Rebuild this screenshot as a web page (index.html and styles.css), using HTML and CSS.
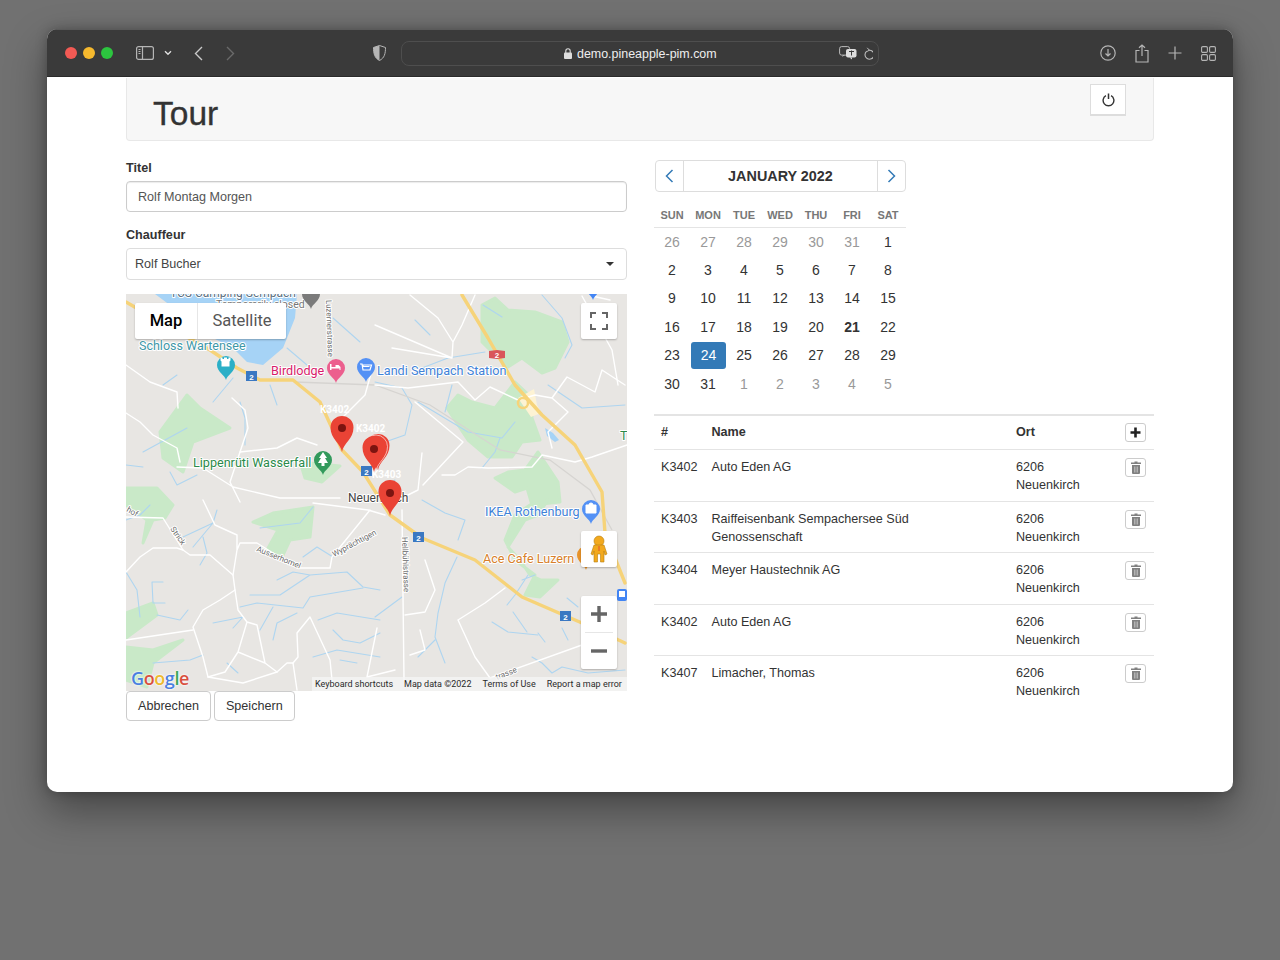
FILE: index.html
```html
<!DOCTYPE html>
<html lang="de">
<head>
<meta charset="utf-8">
<title>Tour</title>
<link rel="stylesheet" href="styles.css">
</head>
<body>
<div class="window">
  <header class="toolbar">
    <div class="lights"><span class="dot red"></span><span class="dot yellow"></span><span class="dot green"></span></div>
    <svg class="ti sidebar" width="18" height="14" viewBox="0 0 18 14"><rect x=".6" y=".6" width="16.8" height="12.8" rx="2" fill="none" stroke="#b5b5b5" stroke-width="1.2"/><path d="M6.5 1v12" stroke="#b5b5b5" stroke-width="1.2"/><path d="M2.5 3.5h2M2.5 5.5h2M2.5 7.5h2" stroke="#b5b5b5"/></svg>
    <svg class="ti chevdown" width="8" height="6" viewBox="0 0 8 6"><path d="M1 1.2l3 3 3-3" fill="none" stroke="#ddd" stroke-width="1.4"/></svg>
    <svg class="ti back" width="9" height="15" viewBox="0 0 9 15"><path d="M8 1L1.5 7.5 8 14" fill="none" stroke="#c9c9c9" stroke-width="1.4"/></svg>
    <svg class="ti forward" width="9" height="15" viewBox="0 0 9 15"><path d="M1 1l6.500 6.500L1 14" fill="none" stroke="#6a6a6a" stroke-width="1.4"/></svg>
    <svg class="ti shield" width="13" height="16" viewBox="0 0 13 16"><path d="M6.500.5L12.500 2.500c0 6-1 10.500-6 13-5-2.500-6-7-6-13z" fill="#3a3a3a" stroke="#b5b5b5"/><path d="M6.500.5L.5 2.500c0 6 1 10.500 6 13z" fill="#b5b5b5"/></svg>
    <div class="address">
      <svg class="lock" width="8" height="11" viewBox="0 0 8 11"><rect y="4.500" width="8" height="6.500" rx="1" fill="#ddd"/><path d="M1.800 5V3a2.200 2.200 0 014.400 0v2" fill="none" stroke="#ddd" stroke-width="1.100"/></svg>
      <span class="url">demo.pineapple-pim.com</span>
      <svg class="translate" width="18" height="14" viewBox="0 0 18 14"><rect x=".6" y=".6" width="10" height="8.500" rx="2" fill="none" stroke="#bbb"/><path d="M3 11l1-2h2z" fill="#bbb"/><rect x="7" y="3" width="10.500" height="8.500" rx="2" fill="#ddd"/><path d="M13 11.500v2l-2.500-2z" fill="#ddd"/><path d="M10 5.500h5M12.500 4.500v5" stroke="#3a3a3a"/></svg>
      <svg class="reload" width="11" height="13" viewBox="0 0 11 13"><path d="M6.800 2.700A4.500 4.500 0 115 3.500" fill="none" stroke="#bbb" stroke-width="1.100" transform="translate(-.2 .6)"/><path d="M5.200 .8l2.200 2.400-2.600 1.400" fill="none" stroke="#bbb"/></svg>
    </div>
    <div class="tools">
      <svg width="16" height="16" viewBox="0 0 16 16"><circle cx="8" cy="8" r="7.200" fill="none" stroke="#b5b5b5" stroke-width="1.200"/><path d="M8 4v7M5.500 8.500L8 11l2.500-2.500" fill="none" stroke="#b5b5b5" stroke-width="1.200"/></svg>
      <svg width="14" height="19" viewBox="0 0 14 19"><path d="M4.500 6.500H1v11.500h12V6.500H9.500" fill="none" stroke="#b5b5b5" stroke-width="1.200"/><path d="M7 12V1M4 3.800L7 1l3 2.800" fill="none" stroke="#b5b5b5" stroke-width="1.200"/></svg>
      <svg width="14" height="14" viewBox="0 0 14 14"><path d="M7 .5v13M.5 7h13" stroke="#b5b5b5" stroke-width="1.200"/></svg>
      <svg width="15" height="15" viewBox="0 0 15 15"><g fill="none" stroke="#b5b5b5" stroke-width="1.100"><rect x=".6" y=".6" width="5.800" height="5.800" rx="1.200"/><rect x="8.600" y=".6" width="5.800" height="5.800" rx="1.200"/><rect x=".6" y="8.600" width="5.800" height="5.800" rx="1.200"/><rect x="8.600" y="8.600" width="5.800" height="5.800" rx="1.200"/></g></svg>
    </div>
  </header>

  <main class="page">
    <div class="container">
      <div class="page-header">
        <h1>Tour</h1>
        <button class="power" type="button" aria-label="Abmelden">
          <svg width="13" height="14" viewBox="0 0 12 13"><path d="M3.600 2.500a5 5 0 104.800 0" fill="none" stroke="#333" stroke-width="1.300"/><path d="M6 .5v5" stroke="#333" stroke-width="1.400"/></svg>
        </button>
      </div>

      <div class="columns">
        <section class="left">
          <label class="lbl">Titel</label>
          <div class="input">Rolf Montag Morgen</div>
          <label class="lbl second">Chauffeur</label>
          <div class="select"><span>Rolf Bucher</span><i class="caret"></i></div>

          <div class="map">
            <svg class="mapsvg" width="501" height="397" viewBox="126 294 501 397">
              <defs>
                <path id="drop" d="M0 0C-1-5-9-8-9-15a9 9 0 1 1 18 0C9-8 1-5 0 0Z"/>
                <path id="pin" d="M0 0C-1.500-9-11.500-13-11.500-24.500a11.500 11.500 0 1 1 23 0C11.500-13 1.500-9 0 0Z"/>
              </defs>
              <rect x="126" y="294" width="501" height="397" fill="#e8e6e3"/>
              <g class="soft">
              <g class="parks">
                <path d="M482 305L495 298 508 310 535 312 562 322 568 342 555 368 542 373 522 358 508 367 488 348 482 342Z"/>
                <path d="M447 408L458 395 472 402 495 408 515 382 532 398 532 418 540 440 522 442 512 457 488 457 468 440 458 425Z"/>
                <path d="M538 452L558 482 560 502 532 505 527 488 515 492 495 478 508 472 525 470Z"/>
                <path d="M548 500L538 515 525 520 508 547 520 560 530 575 541 580 558 580 540 597 525 595 535 575 515 560 505 540 515 515 530 505Z"/>
                <path d="M160 432L187 395 200 408 230 428 193 442 183 472 163 458Z"/>
                <path d="M126 488L157 488 173 505 165 518 153 520 143 543 147 520 126 505Z"/>
                <path d="M253 522L273 513 313 507 310 537 290 540 283 555 267 550 278 530Z"/>
                <path d="M126 613L153 603 157 615 126 638Z"/>
                <path d="M126 647L153 650 183 640 153 663 147 687 126 680Z"/>
                <path d="M300 462L340 466 322 482 305 478Z"/>
              </g>
              <path d="M155 294H297L295 318 283 348 263 365 247 362 233 348 213 338 190 320Z" fill="#a6d3f6"/>
              <path d="M545 428l8 5 6 7-4 2-8-6z" fill="#a6d3f6"/>
              <path d="M518 398l16-9 3 16 4 8-10 4z" fill="#fdf3d4"/>
              <g class="streams">
                <path d="M287 348L307 365M333 318L360 342M163 385L177 375M270 385L277 405M213 402L233 378M187 428L143 452M126 465L143 467"/>
                <path d="M240 402L245 418 245 445M170 472L177 485 197 475"/>
                <path d="M422 368L448 358 485 352M375 382L402 388 412 405 405 435 385 442M452 385L445 412M418 402L468 432 502 438 515 422M500 438L495 452 482 468"/>
                <path d="M483 305L502 317M542 295L562 318 572 345 565 358M548 385L582 408 625 405"/>
                <path d="M217 510L213 523 183 537M203 537L207 553 200 565M213 523L193 547M260 528L300 523 313 507M303 557L317 547 333 557"/>
                <path d="M277 580L293 572 310 575 347 572 363 587 380 590M250 595L280 595 310 575M240 607L257 603 303 608 310 597 363 588"/>
                <path d="M213 623L243 617 233 628M273 640L277 623 297 613M260 630L273 607M318 620L337 613 380 620M333 630L343 640 360 643 380 633M313 657L337 650 380 657M340 660L357 663"/>
                <path d="M126 572L137 590 140 617M152 582H163M152 582L153 603H165M157 615L180 620 188 610M153 663L190 660 203 655M227 663L238 673"/>
                <path d="M422 500L445 513 465 520 458 540M457 557L445 583 438 613 435 637 445 663M418 657L435 640M375 617L402 597M492 622L508 632 538 635M513 612L527 632"/>
                <path d="M562 628L568 640M538 633L545 642M507 605L515 595 528 575M522 580L535 575M567 598L578 607M552 673L562 667 588 673 625 670M532 657L542 663 552 673"/>
                <path d="M375 495L395 480M415 320L430 335M126 520L140 515 150 505"/>
              </g>
              <path class="rail" d="M295 382L375 385 430 405 500 450 550 460 590 490 612 530"/>
              <g class="roads">
                <path d="M126 365L150 382 177 392 178 408M126 413L140 422 153 435 177 448 180 462M240 452L277 448 297 438 317 445M240 452L230 482 240 502M177 467L203 468 233 487 280 498 340 498"/>
                <path d="M232 398L245 410 248 428 240 452"/>
                <path d="M410 295L438 318 453 342 452 358 375 325M392 348L452 358M453 342L462 325 475 295M458 382L475 400 490 387 518 400M458 382L408 388 375 385"/>
                <path d="M518 400L535 395 552 398 567 377 595 392 602 370 625 385M552 398L568 412 548 432 552 448M627 445L592 457 575 462 542 455 532 467 488 468 468 467 455 475 442 475"/>
                <path d="M415 402L463 442 423 485M422 453L418 490 408 495M582 296L612 350 618 385M592 296L610 300"/>
                <path d="M402 510L404 680M405 615L425 612 435 590 425 560M458 620L485 603 505 588M458 620L475 657 490 678M490 678L582 645"/>
                <path d="M126 517L163 518 183 550 190 555 210 555 233 575 235 590 220 600 203 610 193 627 203 657 208 677 243 683 277 672 287 663 293 663 297 690"/>
                <path d="M126 640L193 630M126 572L140 557 153 548 177 548 183 550M203 500L215 525 237 535 237 550 233 575M237 550L240 543 257 543 297 568 330 568 332 557 370 510M313 503L368 510 385 515"/>
                <path d="M235 590L238 610 247 622 257 625 265 663 277 672M247 622L238 652 265 663M238 652L225 672 208 677M297 633L310 617 330 660 333 690M297 633L298 657 293 663M377 628L367 677M367 677L395 670M420 630L425 650 410 655"/>
                <path d="M340 420L365 395 372 370"/>
              </g>
              <g class="highway">
                <path d="M126 302L145 313 210 350 237 368 260 380 293 380 320 402 342 450 363 472 390 515 422 538 475 560 522 597 582 623 625 643"/>
                <path d="M462 295L488 338 515 385 542 415 575 445 602 492 605 533 625 583"/>
              </g>
              <circle cx="523" cy="403" r="5" fill="none" stroke="#f6d379" stroke-width="2.500"/>
              </g>
              <g class="roadname">
                <text transform="translate(326 300) rotate(88)">Luzernerstrasse</text>
                <text transform="translate(170 529) rotate(55)">Strick</text>
                <text transform="translate(256 551) rotate(22)">Ausserhomel</text>
                <text transform="translate(334 557) rotate(-28)">Wyprächtigen</text>
                <text transform="translate(402 537) rotate(88)">Hellbühlstrasse</text>
                <text transform="translate(126 511) rotate(30)">hof</text>
                <text transform="translate(497 680) rotate(-22)">trasse</text>
              </g>
              <text class="poi gray" x="170" y="297">TCS Camping Sempach</text>
              <text class="closed" x="216" y="308">Temporarily closed</text>
              <use href="#drop" x="311" y="309" fill="#7b7b7b"/>
              <use href="#drop" x="593" y="300" fill="#4285f4"/>
              <use href="#drop" x="226" y="380" fill="#2bafc7"/>
              <use href="#drop" x="336" y="383" fill="#ec5f8e"/>
              <use href="#drop" x="366" y="382" fill="#5491f5"/>
              <use href="#drop" x="323" y="475" fill="#329a5c"/>
              <use href="#drop" x="591" y="524" fill="#5491f5"/>
              <use href="#drop" x="586" y="570" fill="#e8932a"/>
              <g fill="#fff">
                <path d="M221 361v-3h2v1.500h1.500V358h3v1.500H229V358h2v3l-1 1v5h-8v-5z" transform="translate(-.500 -.500)"/>
                <path d="M330 370v-6h1.500v3h4v-2h3l2 2v3h-1v-1.500h-8V370z"/>
                <path d="M360 364h2l1 6h7l1.500-5H363v1.500h6.500" fill="none" stroke="#fff" stroke-width="1.200"/>
                <path d="M323 452l4 6h-2l3 5h-3.500v3h-3v-3H318l3-5h-2z"/>
                <path d="M586 505h10v8h-10zM589 505a2 2 0 014 0" stroke="#fff"/>
              </g>
              <g class="shield-blue">
                <rect x="246" y="371" width="11" height="10"/><text x="251.500" y="379.500">2</text>
                <rect x="361" y="466" width="11" height="10"/><text x="366.500" y="474.500">2</text>
                <rect x="413" y="532" width="11" height="10"/><text x="418.500" y="540.500">2</text>
                <rect x="560" y="611" width="11" height="10"/><text x="565.500" y="619.500">2</text>
              </g>
              <g class="shield-red">
                <path d="M489 351l8-1 8 1v7l-8 1-8-1z"/><text x="497" y="358">2</text>
              </g>
              <rect x="617" y="589" width="10" height="12" rx="2" fill="#4285f4"/>
              <rect x="619" y="591" width="6" height="6" fill="#fff"/>
              <text class="poi teal" x="139" y="350">Schloss Wartensee</text>
              <text class="poi pink" x="271" y="375">Birdlodge</text>
              <text class="poi blue" x="377" y="374.500">Landi Sempach Station</text>
              <text class="poi greenl" x="193" y="467">Lippenrüti Wasserfall</text>
              <text class="poi dark" x="348" y="502">Neuenkirch</text>
              <text class="poi blue" x="485" y="516">IKEA Rothenburg</text>
              <text class="poi orange" x="483" y="562.500">Ace Cafe Luzern</text>
              <text class="poi greenl" x="620" y="440">T</text>
              <g class="mlabel">
                <text x="320" y="413">K3402</text>
                <text x="356" y="432">K3402</text>
                <text x="372" y="478">K3403</text>
              </g>
              <use href="#pin" x="378" y="470" fill="#ea4335"/>
              <use href="#pin" x="376" y="471" fill="#ea4335" stroke="#fff" stroke-width=".6"/>
              <use href="#pin" x="342" y="452" fill="#ea4335"/>
              <use href="#pin" x="374" y="472" fill="#ea4335"/>
              <use href="#pin" x="390" y="516" fill="#ea4335"/>
              <circle cx="342" cy="428" r="4" fill="#7c1410"/>
              <circle cx="374" cy="449" r="4" fill="#7c1410"/>
              <circle cx="390" cy="493" r="4" fill="#7c1410"/>
            </svg>

            <div class="mapctl maptype"><span class="mt on">Map</span><span class="mt">Satellite</span></div>
            <div class="mapctl fullscreen">
              <svg width="18" height="18" viewBox="0 0 18 18"><path d="M1 6V1h5M12 1h5v5M17 12v5h-5M6 17H1v-5" fill="none" stroke="#666" stroke-width="2"/></svg>
            </div>
            <div class="mapctl pegman">
              <svg width="18" height="28" viewBox="0 0 18 28"><circle cx="9" cy="6" r="5" fill="#f2a91e" stroke="#b77f10" stroke-width=".6"/><path d="M4 10h10l3 9-2 1-1-4v11h-3.500v-8h-3v8H4V16l-1 4-2-1z" fill="#f2a91e" stroke="#b77f10" stroke-width=".6"/><path d="M9 11v5" stroke="#e0532f"/></svg>
            </div>
            <div class="mapctl zoomctl">
              <svg width="18" height="18" viewBox="0 0 18 18"><path d="M9 1v16M1 9h16" stroke="#666" stroke-width="3.400"/></svg>
              <i class="zsep"></i>
              <svg width="18" height="18" viewBox="0 0 18 18"><path d="M1 9h16" stroke="#666" stroke-width="3.400"/></svg>
            </div>
            <div class="glogo"><b class="g1">G</b><b class="g2">o</b><b class="g3">o</b><b class="g1">g</b><b class="g4">l</b><b class="g2">e</b></div>
            <div class="attr">
              <span class="a1">Keyboard shortcuts</span><span class="a2">Map data ©2022</span><span class="a3">Terms of Use</span><span class="a4">Report a map error</span>
            </div>
          </div>

          <div class="buttons">
            <button class="btn" type="button">Abbrechen</button>
            <button class="btn" type="button">Speichern</button>
          </div>
        </section>

        <section class="right">
          <div class="cal-nav">
            <span class="navbtn"><svg width="9" height="14" viewBox="0 0 9 14"><path d="M7.500 1L1.500 7l6 6" fill="none" stroke="#337ab7" stroke-width="1.500"/></svg></span>
            <strong class="cal-title">JANUARY 2022</strong>
            <span class="navbtn"><svg width="9" height="14" viewBox="0 0 9 14"><path d="M1.500 1l6 6-6 6" fill="none" stroke="#337ab7" stroke-width="1.500"/></svg></span>
          </div>
          <div class="cal-grid">
            <span class="dow">SUN</span><span class="dow">MON</span><span class="dow">TUE</span><span class="dow">WED</span><span class="dow">THU</span><span class="dow">FRI</span><span class="dow">SAT</span>
            <span class="d m">26</span><span class="d m">27</span><span class="d m">28</span><span class="d m">29</span><span class="d m">30</span><span class="d m">31</span><span class="d">1</span>
            <span class="d">2</span><span class="d">3</span><span class="d">4</span><span class="d">5</span><span class="d">6</span><span class="d">7</span><span class="d">8</span>
            <span class="d">9</span><span class="d">10</span><span class="d">11</span><span class="d">12</span><span class="d">13</span><span class="d">14</span><span class="d">15</span>
            <span class="d">16</span><span class="d">17</span><span class="d">18</span><span class="d">19</span><span class="d">20</span><span class="d today">21</span><span class="d">22</span>
            <span class="d">23</span><span class="d sel">24</span><span class="d">25</span><span class="d">26</span><span class="d">27</span><span class="d">28</span><span class="d">29</span>
            <span class="d">30</span><span class="d">31</span><span class="d m">1</span><span class="d m">2</span><span class="d m">3</span><span class="d m">4</span><span class="d m">5</span>
          </div>

          <div class="tbl">
            <div class="tr head">
              <span class="c1">#</span><span class="c2">Name</span><span class="c3">Ort</span>
              <span class="c4"><button class="mini" type="button" aria-label="Hinzufügen"><svg width="11" height="11" viewBox="0 0 11 11"><path d="M5.500 .5v10M.5 5.500h10" stroke="#222" stroke-width="2.600"/></svg></button></span>
            </div>
            <div class="tr">
              <span class="c1">K3402</span><span class="c2">Auto Eden AG</span><span class="c3">6206<br>Neuenkirch</span>
              <span class="c4"><button class="mini" type="button" aria-label="Löschen"><svg class="trash" width="10" height="13" viewBox="0 0 10 13"><path d="M3.500 1.500V.5h3v1H10v1.500H0V1.500zM1 4h8v8a1 1 0 01-1 1H2a1 1 0 01-1-1z" fill="#808080"/><path d="M3.500 5.500v6M5 5.500v6M6.500 5.500v6" stroke="#fff" stroke-width=".4"/></svg></button></span>
            </div>
            <div class="tr">
              <span class="c1">K3403</span><span class="c2">Raiffeisenbank Sempachersee Süd<br>Genossenschaft</span><span class="c3">6206<br>Neuenkirch</span>
              <span class="c4"><button class="mini" type="button" aria-label="Löschen"><svg class="trash" width="10" height="13" viewBox="0 0 10 13"><path d="M3.500 1.500V.5h3v1H10v1.500H0V1.500zM1 4h8v8a1 1 0 01-1 1H2a1 1 0 01-1-1z" fill="#808080"/><path d="M3.500 5.500v6M5 5.500v6M6.500 5.500v6" stroke="#fff" stroke-width=".4"/></svg></button></span>
            </div>
            <div class="tr">
              <span class="c1">K3404</span><span class="c2">Meyer Haustechnik AG</span><span class="c3">6206<br>Neuenkirch</span>
              <span class="c4"><button class="mini" type="button" aria-label="Löschen"><svg class="trash" width="10" height="13" viewBox="0 0 10 13"><path d="M3.500 1.500V.5h3v1H10v1.500H0V1.500zM1 4h8v8a1 1 0 01-1 1H2a1 1 0 01-1-1z" fill="#808080"/><path d="M3.500 5.500v6M5 5.500v6M6.500 5.500v6" stroke="#fff" stroke-width=".4"/></svg></button></span>
            </div>
            <div class="tr">
              <span class="c1">K3402</span><span class="c2">Auto Eden AG</span><span class="c3">6206<br>Neuenkirch</span>
              <span class="c4"><button class="mini" type="button" aria-label="Löschen"><svg class="trash" width="10" height="13" viewBox="0 0 10 13"><path d="M3.500 1.500V.5h3v1H10v1.500H0V1.500zM1 4h8v8a1 1 0 01-1 1H2a1 1 0 01-1-1z" fill="#808080"/><path d="M3.500 5.500v6M5 5.500v6M6.500 5.500v6" stroke="#fff" stroke-width=".4"/></svg></button></span>
            </div>
            <div class="tr">
              <span class="c1">K3407</span><span class="c2">Limacher, Thomas</span><span class="c3">6206<br>Neuenkirch</span>
              <span class="c4"><button class="mini" type="button" aria-label="Löschen"><svg class="trash" width="10" height="13" viewBox="0 0 10 13"><path d="M3.500 1.500V.5h3v1H10v1.500H0V1.500zM1 4h8v8a1 1 0 01-1 1H2a1 1 0 01-1-1z" fill="#808080"/><path d="M3.500 5.500v6M5 5.500v6M6.500 5.500v6" stroke="#fff" stroke-width=".4"/></svg></button></span>
            </div>
          </div>
        </section>
      </div>
    </div>
  </main>
</div>
</body>
</html>
```
FILE: styles.css
```css
* { box-sizing: border-box; }
html, body { margin: 0; height: 100%; }
body {
  width: 1280px;
  height: 960px;
  overflow: hidden;
  padding: 29px 47px 0;
  background: #717171;
  font-family: "Liberation Sans", Arial, sans-serif;
  font-size: 12.6px;
  line-height: 18px;
  color: #333;
}
.window {
  width: 1186px;
  height: 763px;
  background: #fff;
  border-radius: 10px;
  overflow: hidden;
  box-shadow: 0 18px 40px rgba(0, 0, 0, .38), 0 0 12px rgba(0, 0, 0, .25);
}
.toolbar {
  height: 48px;
  background: #3a3a3a;
  border-top: 1px solid #5a5a5a;
  border-bottom: 1px solid #2a2a2a;
  display: flex;
  align-items: center;
  padding-left: 18px;
}
.lights { display: flex; gap: 6px; }
.dot { width: 12px; height: 12px; border-radius: 50%; }
.red { background: #f25a54; }
.yellow { background: #f6b92e; }
.green { background: #2cc53f; }
.ti { flex: none; }
.sidebar { margin-left: 23px; }
.chevdown { margin-left: 10px; }
.back { margin-left: 22px; }
.forward { margin-left: 23px; }
.shield { margin-left: 138px; }
.address {
  margin-left: 15px;
  width: 478px;
  height: 25px;
  padding-right: 5px;
  border: 1px solid #4e4e4e;
  border-radius: 8px;
  display: flex;
  align-items: center;
  color: #eee;
  font-size: 12.45px;
}
.lock { margin-left: 162px; flex: none; }
.url { margin: 2px 0 0 5px; white-space: nowrap; }
.translate { margin-left: auto; flex: none; }
.reload { margin-left: 5px; flex: none; }
.tools { margin-left: 221px; display: flex; align-items: center; gap: 19px; }
.tools svg { flex: none; }

.page { height: 714px; }
.container { width: 1028px; margin-left: 79px; }
.page-header {
  height: 63px;
  margin-top: 1px;
  padding: 6px 27px 0;
  background: #f7f7f7;
  border: 1px solid #e8e8e8;
  border-top: 0;
  border-radius: 0 0 4px 4px;
  display: flex;
  justify-content: space-between;
  align-items: flex-start;
}
.page-header h1 {
  margin: 10px 0 0 -1px;
  font-size: 33.5px;
  line-height: 40px;
  font-weight: 400;
  color: #333;
  -webkit-text-stroke: .35px #333;
}
.power {
  width: 36px;
  height: 32px;
  padding: 0;
  background: #fff;
  border: 1px solid #ddd;
  border-bottom-width: 2px;
  display: flex;
  align-items: center;
  justify-content: center;
}
.columns { display: grid; grid-template-columns: 501px 500px; column-gap: 27px; }
.left { padding-top: 18px; }
.lbl { display: block; font-weight: 700; margin-bottom: 4px; }
.lbl.second { margin-top: 14px; }
.input {
  height: 31px;
  padding: 6px 11px 0 11px;
  border: 1px solid #ccc;
  border-radius: 4px;
  color: #555;
  box-shadow: inset 0 1px 1px rgba(0, 0, 0, .08);
}
.select {
  height: 32px;
  padding: 6px 8px;
  border: 1px solid #ddd;
  border-radius: 4px;
  color: #444;
  display: flex;
  justify-content: space-between;
  align-items: center;
}
.caret {
  width: 0;
  height: 0;
  margin-right: 4px;
  border-left: 4px solid transparent;
  border-right: 4px solid transparent;
  border-top: 4px solid #333;
}
.map {
  position: relative;
  width: 501px;
  height: 397px;
  margin-top: 14px;
  overflow: hidden;
  font-family: Roboto, "Liberation Sans", sans-serif;
}
.mapsvg { display: block; }
.soft { filter: blur(.35px); }
.parks path { fill: #c9e9c8; stroke: #c9e9c8; stroke-width: 3px; stroke-linejoin: round; }
.streams path { fill: none; stroke: #aed5f0; stroke-width: 1.1px; stroke-linejoin: round; stroke-linecap: round; }
.rail { fill: none; stroke: #d6d4d1; stroke-width: 1.3px; }
.roads path { fill: none; stroke: #fff; stroke-width: 1.4px; stroke-linejoin: round; stroke-linecap: round; }
.highway path { fill: none; stroke: #f6d379; stroke-width: 3.4px; stroke-linejoin: round; stroke-linecap: round; }
.poi { font-family: Roboto, sans-serif; font-size: 12.6px; paint-order: stroke; stroke: #fff; stroke-width: 2px; stroke-linejoin: round; }
.teal { fill: #3d97a8; font-size: 12.5px; }
.pink { fill: #d81b6a; }
.blue { fill: #3f82d8; }
.greenl { fill: #2b8a4a; }
.dark { fill: #444; font-size: 12px; }
.orange { fill: #d8802a; }
.gray { fill: #5b6f80; font-size: 12px; }
.closed { font-family: Roboto, sans-serif; font-size: 10.5px; fill: #777; paint-order: stroke; stroke: #fff; stroke-width: 2px; }
.roadname text { font-family: Roboto, sans-serif; font-size: 8px; fill: #6b6b6b; paint-order: stroke; stroke: #fff; stroke-width: 2px; stroke-linejoin: round; }
.mlabel text { font-family: Roboto, sans-serif; font-size: 10px; font-weight: 700; fill: #fff; }
.shield-blue rect { fill: #3a78c2; }
.shield-blue text, .shield-red text { font-family: "Liberation Sans", sans-serif; font-size: 8px; font-weight: 700; fill: #fff; text-anchor: middle; }
.shield-red path { fill: #d9555a; }
.mapctl {
  position: absolute;
  background: #fff;
  box-shadow: 0 1px 2px rgba(0, 0, 0, .25);
  border-radius: 2px;
  display: flex;
  align-items: center;
  justify-content: center;
}
.maptype { left: 9px; top: 9px; width: 151px; height: 36px; }
.mt { height: 36px; line-height: 36px; font-size: 16.5px; color: #565656; text-align: center; }
.mt.on { width: 63px; color: #000; font-weight: 500; border-right: 1px solid #e6e6e6; }
.mt:not(.on) { flex: 1; }
.fullscreen { left: 455px; top: 9px; width: 36px; height: 36px; }
.pegman { left: 455px; top: 237px; width: 36px; height: 36px; }
.zoomctl { left: 455px; top: 302px; width: 36px; height: 73px; flex-direction: column; }
.zoomctl svg { margin: 9px 0; }
.zsep { width: 28px; height: 1px; background: #e6e6e6; }
.glogo {
  position: absolute;
  left: 5px;
  top: 372px;
  font-family: "Open Sans", sans-serif;
  font-size: 18px;
  line-height: 24px;
  letter-spacing: -.4px;
  text-shadow: 0 0 2px #fff, 0 0 2px #fff;
}
.glogo b { font-weight: 600; }
.g1 { color: #4a7fe0; }
.g2 { color: #d8503f; }
.g3 { color: #edb92e; }
.g4 { color: #3aa757; }
.attr {
  position: absolute;
  left: 186px;
  right: 0;
  bottom: 0;
  height: 14px;
  background: rgba(245, 245, 245, .75);
  font-size: 9px;
  line-height: 14px;
  color: #2a2a2a;
  display: flex;
  white-space: nowrap;
}
.a1 { margin-left: 3px; }
.a2 { margin-left: 11px; }
.a3 { margin-left: 11px; }
.a4 { margin-left: 11px; }
.buttons { display: flex; gap: 3px; }
.btn {
  height: 30px;
  padding: 0 11px;
  background: #fff;
  border: 1px solid #ccc;
  border-radius: 4px;
  font: inherit;
  color: #333;
}
.right { padding-top: 19px; }
.cal-nav {
  width: 251px;
  height: 32px;
  margin-left: 1px;
  border: 1px solid #ddd;
  border-radius: 4px;
  display: flex;
  align-items: center;
}
.navbtn { width: 28px; height: 100%; display: flex; align-items: center; justify-content: center; }
.navbtn:first-child { border-right: 1px solid #ddd; }
.navbtn:last-child { border-left: 1px solid #ddd; }
.cal-title { flex: 1; text-align: center; font-size: 14.4px; color: #333; }
.cal-grid {
  width: 252px;
  display: grid;
  grid-template-columns: repeat(7, 36px);
  grid-template-rows: 36px repeat(6, 28.4px);
  text-align: center;
  align-items: center;
}
.dow {
  align-self: stretch;
  padding-top: 14px;
  border-bottom: 1px solid #e4e4e4;
  font-size: 11px;
  font-weight: 700;
  color: #777;
}
.d { font-size: 14px; color: #333; line-height: 27px; height: 27px; }
.d.m { color: #999; }
.d.today { font-weight: 700; }
.d.sel { background: #337ab7; color: #fff; border-radius: 3px; margin-left: 1px; }
.tbl { margin-top: 16px; border-top: 2px solid #e4e4e4; }
.tr {
  display: flex;
  min-height: 51.5px;
  padding: 8px 7px 0;
  border-bottom: 1px solid #e4e4e4;
}
.tr:last-child { border-bottom: 0; }
.tr.head { min-height: 34px; padding-top: 7px; font-weight: 700; }
.c1 { width: 50.5px; }
.c2 { width: 304.5px; }
.c3 { width: 109px; }
.c4 { width: 22px; }
.mini {
  display: flex;
  align-items: center;
  justify-content: center;
  width: 21px;
  height: 19px;
  padding: 0;
  background: #fff;
  border: 1px solid #ccc;
  border-radius: 3px;
}
```
